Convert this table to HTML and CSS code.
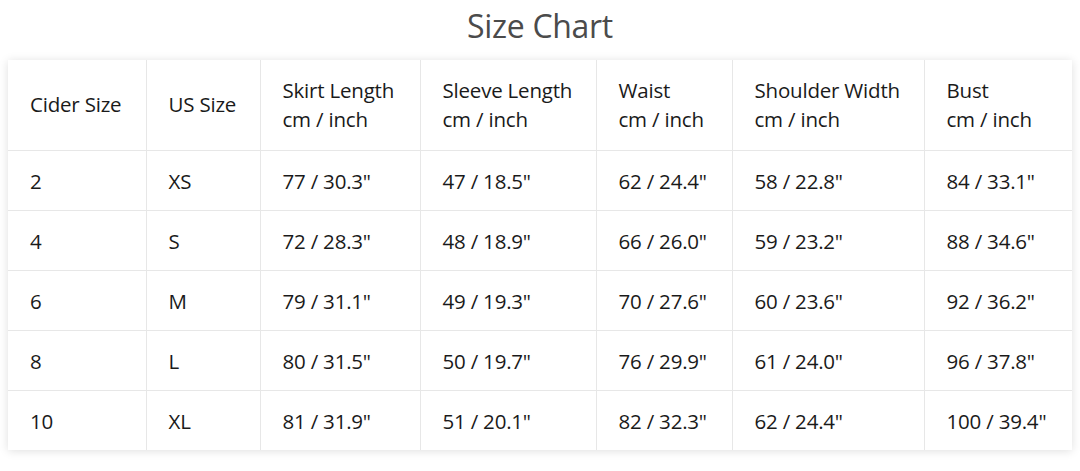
FILE: index.html
```html
<!DOCTYPE html>
<html>
<head>
<meta charset="utf-8">
<link rel="stylesheet" href="styles.css">
</head>
<body>
<h1 class="title">Size Chart</h1>
<div class="card">
<table class="chart">
<colgroup>
<col class="c1"><col class="c2"><col class="c3"><col class="c4"><col class="c5"><col class="c6"><col class="c7">
</colgroup>
<thead>
<tr>
<th>Cider Size</th>
<th>US Size</th>
<th>Skirt Length<br>cm / inch</th>
<th>Sleeve Length<br>cm / inch</th>
<th>Waist<br>cm / inch</th>
<th>Shoulder Width<br>cm / inch</th>
<th>Bust<br>cm / inch</th>
</tr>
</thead>
<tbody>
<tr><td>2</td><td>XS</td><td>77 / 30.3"</td><td>47 / 18.5"</td><td>62 / 24.4"</td><td>58 / 22.8"</td><td>84 / 33.1"</td></tr>
<tr><td>4</td><td>S</td><td>72 / 28.3"</td><td>48 / 18.9"</td><td>66 / 26.0"</td><td>59 / 23.2"</td><td>88 / 34.6"</td></tr>
<tr><td>6</td><td>M</td><td>79 / 31.1"</td><td>49 / 19.3"</td><td>70 / 27.6"</td><td>60 / 23.6"</td><td>92 / 36.2"</td></tr>
<tr><td>8</td><td>L</td><td>80 / 31.5"</td><td>50 / 19.7"</td><td>76 / 29.9"</td><td>61 / 24.0"</td><td>96 / 37.8"</td></tr>
<tr><td>10</td><td>XL</td><td>81 / 31.9"</td><td>51 / 20.1"</td><td>82 / 32.3"</td><td>62 / 24.4"</td><td>100 / 39.4"</td></tr>
</tbody>
</table>
</div>
</body>
</html>
```

FILE: styles.css
```css
html, body {
  margin: 0;
  padding: 0;
  background: #ffffff;
}
body {
  width: 1080px;
  height: 471px;
  overflow: hidden;
  font-family: "Open Sans", "Noto Sans", "Liberation Sans", sans-serif;
  color: #1a1a1a;
}
.title {
  margin: 0;
  height: 60px;
  padding-top: 5px;
  box-sizing: border-box;
  text-align: center;
  font-size: 32px;
  font-weight: 500;
  line-height: 42px;
  color: #4b4b4b;
  letter-spacing: -0.3px;
}
.card {
  margin: 0 8px;
  width: 1064px;
  box-shadow: 0 1px 9px rgba(0, 0, 0, 0.13);
  background: #fff;
}
.chart {
  width: 1064px;
  border-collapse: collapse;
  table-layout: fixed;
}
.c1 { width: 138px; }
.c2 { width: 114px; }
.c3 { width: 160px; }
.c4 { width: 176px; }
.c5 { width: 136px; }
.c6 { width: 192px; }
.c7 { width: 148px; }
.chart th, .chart td {
  border: 1px solid #e7e7e7;
  text-align: left;
  padding: 0 0 0 22px;
  font-size: 20.5px;
  font-weight: 400;
  white-space: nowrap;
  letter-spacing: -0.2px;
}
.chart thead th {
  height: 89px;
  line-height: 29px;
  padding-bottom: 1px;
}
.chart td {
  height: 59px;
  line-height: 24px;
}
.chart tr:first-child th { border-top: none; }
.chart tr th:first-child, .chart tr td:first-child { border-left: none; }
.chart tr th:last-child, .chart tr td:last-child { border-right: none; }
.chart tbody tr:last-child td { border-bottom: none; }
```
